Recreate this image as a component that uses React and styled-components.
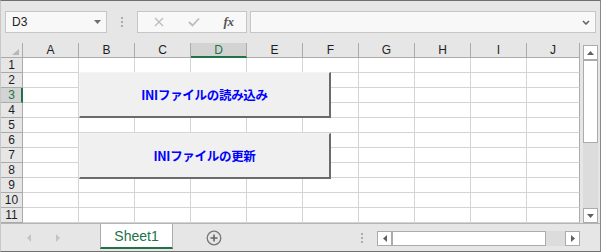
import React from "react";
import styled, { createGlobalStyle } from "styled-components";

const Global = createGlobalStyle`
  html, body { margin: 0; padding: 0; background: #ffffff; }
  #root { width: 601px; height: 252px; }
`;

const UI = `"Liberation Sans", "Noto Sans CJK JP", sans-serif`;
const GREEN = "#217346";

const Window = styled.div`
  width: 601px;
  height: 252px;
  box-sizing: border-box;
  background: #e6e6e6;
  border-top: 1px solid #6f6f6f;
  border-bottom: 1px solid #6f6f6f;
  border-right: 1px solid #8a8a8a;
  border-left: 1px solid #c8c8c8;
  display: flex;
  flex-direction: column;
  font-family: ${UI};
  overflow: hidden;
`;

const FormulaRow = styled.div`
  display: flex;
  align-items: stretch;
  height: 22px;
  margin: 10px 4px 10px 4px;
`;

const Field = styled.div`
  box-sizing: border-box;
  height: 22px;
  background: #f8f8f8;
  border: 1px solid #c6c6c6;
  display: flex;
  align-items: center;
`;

const NameBox = styled(Field)`
  width: 102px;
  padding: 0 5px 0 6px;
  font-size: 12px;
  color: #222;
`;

const NameText = styled.span`
  flex: 1;
`;

const Grip = styled.div`
  width: ${(p) => p.$w}px;
  margin-right: ${(p) => p.$mr || 0}px;
  margin-top: ${(p) => p.$mt || 0}px;
  display: flex;
  flex-direction: column;
  align-items: center;
  justify-content: center;
  gap: 2px;
  align-self: ${(p) => p.$self || "stretch"};
  height: ${(p) => (p.$h ? `${p.$h}px` : "auto")};
`;

const Dot = styled.i`
  display: block;
  width: 2px;
  height: 2px;
  background: #ababab;
`;

const FxBox = styled(Field)`
  width: 110px;
  padding-left: 3px;
  margin-right: 3px;
`;

const FxSlot = styled.div`
  width: 35px;
  display: flex;
  justify-content: center;
  align-items: center;
`;

const FxText = styled.span`
  font-family: "Liberation Serif", "DejaVu Serif", serif;
  font-style: italic;
  font-weight: bold;
  font-size: 13px;
  color: #555;
  letter-spacing: -0.5px;
`;

const FormulaInput = styled(Field)`
  flex: 1;
  justify-content: flex-end;
  padding-right: 5px;
`;

const Main = styled.div`
  display: flex;
  height: 180px;
`;

const Grid = styled.div`
  position: relative;
  display: grid;
  grid-template-columns: 22px repeat(9, 56px) 53px;
  grid-template-rows: repeat(12, 15px);
  width: 579px;
  background: #fff;
`;

const Cell = styled.div`
  box-sizing: border-box;
  background: #fff;
  border-right: 1px solid ${(p) => (p.$edge ? "#ababab" : "#d4d4d4")};
  border-bottom: 1px solid #d4d4d4;
`;

const HeadBase = styled.div`
  box-sizing: border-box;
  display: flex;
  align-items: center;
  justify-content: center;
  font-size: 12px;
  line-height: 1;
  color: ${(p) => (p.$active ? GREEN : "#1e1e1e")};
  background: ${(p) => (p.$active ? "#d3d3d3" : "#e6e6e6")};
`;

const ColHead = styled(HeadBase)`
  border-right: 1px solid #ababab;
  border-bottom: ${(p) => (p.$active ? `2px solid ${GREEN}` : "1px solid #ababab")};
  padding-top: ${(p) => (p.$active ? 1 : 0)}px;
`;

const RowHead = styled(HeadBase)`
  border-right: ${(p) => (p.$active ? `2px solid ${GREEN}` : "1px solid #ababab")};
  border-bottom: 1px solid #ababab;
  padding-left: ${(p) => (p.$active ? 1 : 0)}px;
`;

const Corner = styled.div`
  box-sizing: border-box;
  background: #e6e6e6;
  border-right: 1px solid #ababab;
  border-bottom: 1px solid #ababab;
  display: flex;
  justify-content: flex-end;
  align-items: flex-end;
  padding: 0 3px 2px 0;
`;

const SheetButton = styled.div`
  position: absolute;
  left: 78px;
  top: ${(p) => p.$top}px;
  width: 252px;
  height: 46px;
  box-sizing: border-box;
  background: #f0f0f0;
  border-top: 1px solid #f4f4f4;
  border-left: 1px solid #f4f4f4;
  border-right: 2px solid #6b6b6b;
  border-bottom: 2px solid #6b6b6b;
  display: flex;
  align-items: center;
  justify-content: center;
  font-family: "Noto Sans CJK JP", "Liberation Sans", sans-serif;
  font-weight: bold;
  font-size: 12.5px;
  color: #0000ff;
  letter-spacing: -0.3px;
`;

const VScroll = styled.div`
  margin: 2px 0 0 3px;
  width: 15px;
  height: 178px;
  display: flex;
  flex-direction: column;
`;

const ScrollBtn = styled.div`
  box-sizing: border-box;
  width: 15px;
  height: 15px;
  flex: none;
  background: #fff;
  border: 1px solid #ababab;
  display: flex;
  align-items: center;
  justify-content: center;
`;

const Thumb = styled.div`
  box-sizing: border-box;
  background: #fff;
  border: 1px solid #ababab;
  ${(p) => (p.$vertical ? `height: 83px; width: 15px;` : `flex: 1; height: 15px;`)}
  flex-shrink: 0;
`;

const Track = styled.div`
  background: #dcdcdc;
  ${(p) => (p.$vertical ? `flex: 1;` : `width: 19px; height: 15px;`)}
`;

const TabBar = styled.div`
  display: flex;
  align-items: flex-start;
  height: 27px;
  border-top: 1px solid #b4b4b4;
`;

const NavArea = styled.div`
  width: 99px;
  height: 27px;
  box-sizing: border-box;
  padding-left: 22px;
  display: flex;
  align-items: center;
  gap: 17px;
`;

const NavSlot = styled.div`
  width: 12px;
  display: flex;
  justify-content: center;
`;

const Tab = styled.div`
  box-sizing: border-box;
  width: 73px;
  height: 25px;
  background: #fff;
  border-left: 1px solid #ababab;
  border-right: 1px solid #ababab;
  border-bottom: 2px solid ${GREEN};
  display: flex;
  align-items: center;
  justify-content: center;
  font-size: 14px;
  color: ${GREEN};
  padding-top: 1px;
`;

const PlusArea = styled.div`
  width: 81px;
  height: 27px;
  display: flex;
  align-items: center;
  justify-content: center;
  padding-top: 1px;
  box-sizing: border-box;
`;

const Spacer = styled.div`
  flex: 1;
`;

const HScroll = styled.div`
  display: flex;
  width: 203px;
  margin: 7px 20px 0 0;
`;

const cols = ["A", "B", "C", "D", "E", "F", "G", "H", "I", "J"];
const rows = [1, 2, 3, 4, 5, 6, 7, 8, 9, 10, 11];

const Tri = ({ dir, color = "#606060", w = 7, h = 4 }) => {
  const pts = {
    down: `0,0 ${w},0 ${w / 2},${h}`,
    up: `0,${h} ${w},${h} ${w / 2},0`,
    left: `${h},0 ${h},${w} 0,${w / 2}`,
    right: `0,0 0,${w} ${h},${w / 2}`,
  }[dir];
  const vw = dir === "left" || dir === "right" ? h : w;
  const vh = dir === "left" || dir === "right" ? w : h;
  return (
    <svg width={vw} height={vh} viewBox={`0 0 ${vw} ${vh}`}>
      <polygon points={pts} fill={color} />
    </svg>
  );
};

export default function App() {
  return (
    <>
      <Global />
      <Window>
        <FormulaRow>
          <NameBox>
            <NameText>D3</NameText>
            <Tri dir="down" color="#6d6d6d" />
          </NameBox>
          <Grip $w={30}>
            <Dot />
            <Dot />
            <Dot />
          </Grip>
          <FxBox>
            <FxSlot>
              <svg width="10" height="10" viewBox="0 0 10 10">
                <path d="M1 1 L9 9 M9 1 L1 9" stroke="#bcbcbc" strokeWidth="1.3" fill="none" />
              </svg>
            </FxSlot>
            <FxSlot>
              <svg width="12" height="10" viewBox="0 0 12 10">
                <path d="M1 5 L4.5 8.5 L11 1.5" stroke="#bcbcbc" strokeWidth="1.8" fill="none" />
              </svg>
            </FxSlot>
            <FxSlot>
              <FxText>fx</FxText>
            </FxSlot>
          </FxBox>
          <FormulaInput>
            <svg width="8" height="5" viewBox="0 0 8 5">
              <path d="M1 1 L4 4 L7 1" stroke="#5f5f5f" strokeWidth="1.5" fill="none" />
            </svg>
          </FormulaInput>
        </FormulaRow>

        <Main>
          <Grid>
            <Corner>
              <svg width="7" height="6" viewBox="0 0 7 6">
                <polygon points="7,0 7,6 0,6" fill="#b8b8b8" />
              </svg>
            </Corner>
            {cols.map((c) => (
              <ColHead key={c} $active={c === "D"}>
                {c}
              </ColHead>
            ))}
            {rows.map((r) => (
              <React.Fragment key={r}>
                <RowHead $active={r === 3}>{r}</RowHead>
                {cols.map((c) => (
                  <Cell key={c} $edge={c === "J"} />
                ))}
              </React.Fragment>
            ))}
            <SheetButton $top={29}>INIファイルの読み込み</SheetButton>
            <SheetButton $top={90}>INIファイルの更新</SheetButton>
          </Grid>
          <VScroll>
            <ScrollBtn>
              <Tri dir="up" />
            </ScrollBtn>
            <Thumb $vertical />
            <Track $vertical />
            <ScrollBtn>
              <Tri dir="down" />
            </ScrollBtn>
          </VScroll>
        </Main>

        <TabBar>
          <NavArea>
            <NavSlot>
              <Tri dir="left" color="#c4c4c4" w={8} h={4} />
            </NavSlot>
            <NavSlot>
              <Tri dir="right" color="#c4c4c4" w={8} h={4} />
            </NavSlot>
          </NavArea>
          <Tab>Sheet1</Tab>
          <PlusArea>
            <svg width="16" height="16" viewBox="0 0 16 16">
              <circle cx="8" cy="8" r="6.8" stroke="#777" strokeWidth="1.3" fill="none" />
              <path d="M8 4.5 V11.5 M4.5 8 H11.5" stroke="#666" strokeWidth="1.6" />
            </svg>
          </PlusArea>
          <Spacer />
          <Grip $w={9} $mr={11} $mt={9} $self="flex-start" $h={10}>
            <Dot />
            <Dot />
            <Dot />
          </Grip>
          <HScroll>
            <ScrollBtn>
              <Tri dir="left" w={7} h={4} />
            </ScrollBtn>
            <Thumb />
            <Track />
            <ScrollBtn>
              <Tri dir="right" w={7} h={4} />
            </ScrollBtn>
          </HScroll>
        </TabBar>
      </Window>
    </>
  );
}
